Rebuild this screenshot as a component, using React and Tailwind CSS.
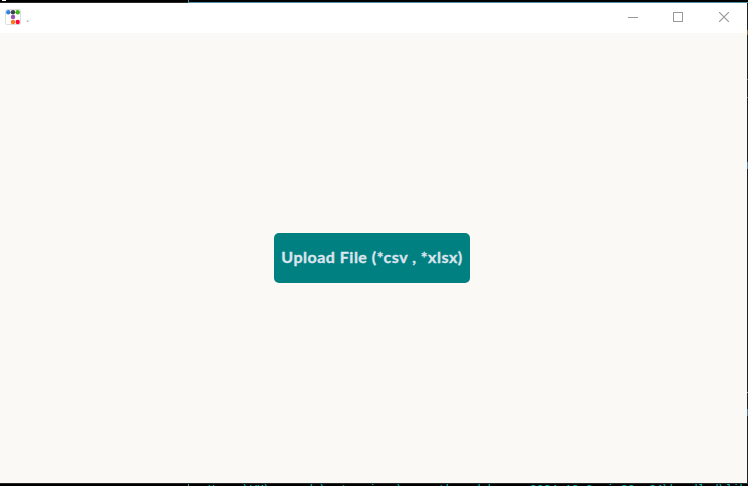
const DOTS = [
  [8.3, 12.2, '#2f86df'], [13, 12.2, '#414549'], [17.7, 12.2, '#43b51f'],
  [13, 17, '#9a50bd'], [13, 22, '#ff761c'], [17.7, 22, '#ff0838'],
];

function AppIcon() {
  return (
    <svg className="ml-[5px] size-4" viewBox="5 9 16 16">
      <rect x="5.5" y="9.5" width="15" height="15" rx="1" fill="#fff" stroke="#dedede" />
      {DOTS.map(([x, y, c]) => <circle key={c} cx={x} cy={y} r="2.2" fill={c} />)}
    </svg>
  );
}

function WindowControls() {
  return (
    <div className="ml-auto flex h-full items-center text-[#999999]">
      <svg className="mr-[35px] size-[10px]" viewBox="0 0 10 10" shapeRendering="crispEdges"><path d="M0 5.5H10" stroke="currentColor" /></svg>
      <svg className="mr-9 size-[10px]" viewBox="0 0 10 10" shapeRendering="crispEdges"><path d="M.5.5h9v9h-9z" fill="none" stroke="currentColor" /></svg>
      <svg className="mr-[18px] size-[10px]" viewBox="0 0 10 10"><path d="M0 0L10 10M10 0L0 10" stroke="currentColor" strokeWidth="1.2" /></svg>
    </div>
  );
}

export default function App() {
  return (
    <div className="flex h-[486px] w-[748px] flex-col overflow-hidden bg-black">
      <div className="flex h-[3px] flex-none">
        <div className="w-[188px] border-b border-[#292929]"><div className="ml-0.5 h-px w-1 bg-white" /></div>
        <div className="flex-1 border-b border-l border-[#4d91a5]" />
      </div>
      <div className="flex h-[480px] flex-none">
        <main className="flex w-[747px] flex-col bg-[#faf9f5]">
          <header className="flex h-[30px] flex-none items-center bg-white pb-0.5">
            <AppIcon />
            <span className="ml-[5px] pt-0.5 font-['Open_Sans',sans-serif] text-xs text-[#999999]">.</span>
            <WindowControls />
          </header>
          <div className="flex flex-1 items-start pt-[200px] pl-[274px]">
            <button className="h-[50px] w-[196px] rounded-[5px] bg-[#008080] pb-0.5 font-['Lato',sans-serif] text-[16px] font-bold tracking-[0.5px] whitespace-nowrap text-[#dce4ee] [-webkit-text-stroke:0.35px_#dce4ee]">Upload File (*csv , *xlsx)</button>
          </div>
        </main>
        <div className="flex w-px flex-col bg-[#202124]">
          <div className="mt-[27px] h-[5px] bg-[#80602b]" />
          <div className="mt-[44px] h-px bg-[#807968]" />
          <div className="mt-[17px] h-px bg-[#807968]" />
          <div className="mt-16 h-[7px] bg-[#4d83ab]" />
          <div className="mt-[223px] h-px bg-[#9a9a9a]" />
          <div className="mt-[16px] h-[7px] bg-[#4d7b9c]" />
        </div>
      </div>
      <div className="flex h-[3px] flex-none overflow-hidden border-t border-[#292929]">
        <div className="ml-[188px] w-px flex-none bg-[#4d91a5]" />
        <div className="ml-[19px] h-2 font-['Liberation_Mono',monospace] text-[11.66px] leading-[11px] whitespace-nowrap text-[#00c0c0]">Users\VK\.vscode\extensions\ms-python.debugpy-2024.10.0-win32-x64\bundled\lib</div>
      </div>
    </div>
  );
}
